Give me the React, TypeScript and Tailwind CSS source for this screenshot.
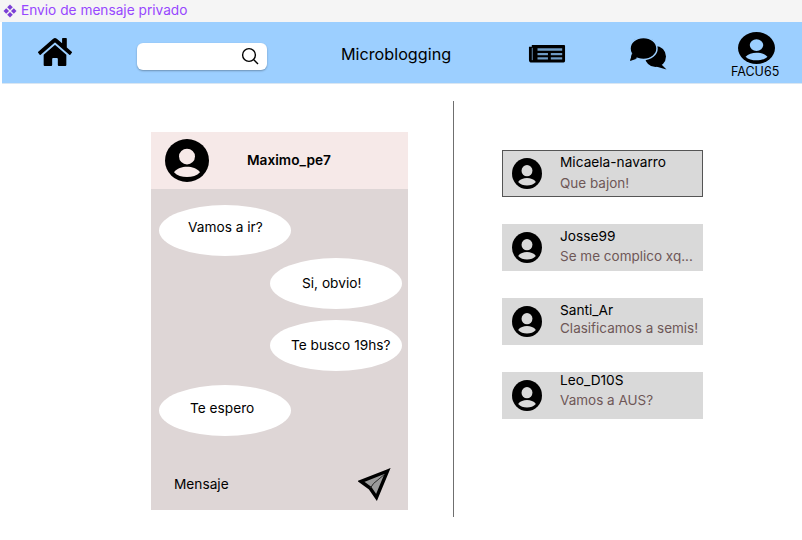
import { FaHome } from "react-icons/fa";

const font = { fontFamily: "Inter, sans-serif" };

const conversations = [
  { name: "Micaela-navarro", text: "Que bajon!", active: true, mt: "mt-0", top: "mt-[3px]", gap: "mt-[4px]" },
  { name: "Josse99", text: "Se me complico xq...", active: false, mt: "mt-[27px]", top: "mt-[4px]", gap: "mt-[3px]" },
  { name: "Santi_Ar", text: "Clasificamos a semis!", active: false, mt: "mt-[27px]", top: "mt-[4px]", gap: "mt-[1px]" },
  { name: "Leo_D10S", text: "Vamos a AUS?", active: false, mt: "mt-[27px]", top: "mt-0", gap: "mt-[3px]" },
];

const UserIcon = ({ className }: { className: string }) => (
  <svg viewBox="0 0 44 44" preserveAspectRatio="none" className={className}>
    <circle cx="22" cy="22" r="22" fill="#000" />
    <circle cx="22" cy="18" r="8" fill="currentColor" />
    <path d="M9 34 C12 30 17 28.5 22 28.5 C27 28.5 32 30 35 34 C32 37.5 27 39 22 39 C17 39 12 37.5 9 34 Z" fill="currentColor" />
  </svg>
);

const Bubble = ({ text, right, className }: { text: string; right?: boolean; className: string }) => (
  <div className={`w-[132px] h-[51px] rounded-[50%] bg-white flex items-center text-[13.7px] text-black ${right ? "self-end" : "self-start"} ${className}`}>
    {text}
  </div>
);

export default function App() {
  return (
    <div className="w-[802px] h-[540px] bg-white overflow-hidden" style={font}>
      <div className="h-[22px] bg-[#f5f5f5] pl-[3px] flex items-center gap-[4px] text-[13.7px] leading-none text-[#9747ff]">
        <svg viewBox="0 0 14 14" className="w-[14px] h-[14px]" fill="#7b3fd6">
          <path d="M7 0.5 L9.8 3.2 L7 6 L4.2 3.2 Z" />
          <path d="M7 8 L9.8 10.8 L7 13.5 L4.2 10.8 Z" />
          <path d="M3.2 4.2 L6 7 L3.2 9.8 L0.5 7 Z" />
          <path d="M10.8 4.2 L13.5 7 L10.8 9.8 L8 7 Z" />
        </svg>
        <span>Envio de mensaje privado</span>
      </div>

      <header className="ml-[2px] h-[62px] bg-[#9ccfff] border-b border-[#d9e6f2] flex items-center text-black">
        <FaHome preserveAspectRatio="none" className="ml-[36px] mb-[2px] w-[34px] h-[32px]" />
        <div className="ml-[65px] w-[130px] h-[27px] mt-[7px] bg-white rounded-[6px] shadow-[0_1px_2px_rgba(0,0,0,0.3)] flex items-center justify-end pr-[8px]">
          <svg viewBox="0 0 18 18" className="w-[18px] h-[18px]" fill="none" stroke="#000" strokeWidth="1.4">
            <circle cx="8" cy="8" r="6.4" />
            <path d="M12.8 12.8 L17 17" />
          </svg>
        </div>
        <span className="ml-[74px] mt-[3px] text-[16.2px]">Microblogging</span>
        <svg viewBox="0 0 38 20" className="ml-[77px] mt-[1px] w-[38px] h-[19px]">
          <path d="M5 1 H37 A1 1 0 0 1 38 2 V18 A1.5 1.5 0 0 1 36.5 19.5 H3 A3 3 0 0 1 0 16.5 V3 H3 V1 Z" fill="#000" />
          <rect x="3" y="4" width="0.9" height="13" fill="#6f9cc6" />
          <rect x="9" y="4.5" width="26" height="2.6" fill="#6f9cc6" />
          <rect x="9" y="9.5" width="11" height="2.3" fill="#6f9cc6" />
          <rect x="23" y="9.5" width="12" height="2.3" fill="#6f9cc6" />
          <rect x="9" y="14" width="11" height="2.3" fill="#6f9cc6" />
          <rect x="23" y="14" width="12" height="2.3" fill="#6f9cc6" />
        </svg>
        <svg viewBox="0 0 38 33" className="ml-[63px] mt-[2px] w-[38px] h-[33px]">
          <ellipse cx="26.5" cy="19.5" rx="10.5" ry="10.5" fill="#000" />
          <path d="M32 27 L37.5 32.5 L27 29.5 Z" fill="#000" />
          <path d="M3 17 L1 24 L10 21 Z" fill="#000" />
          <ellipse cx="14.5" cy="11.5" rx="13.5" ry="11" fill="#000" stroke="#9ccfff" strokeWidth="1.5" />
          <path d="M3 16 L1.5 23.5 L9 20 Z" fill="#000" />
        </svg>
        <div className="ml-[63px] w-[50px] flex flex-col items-center mt-[6px]">
          <UserIcon className="ml-[3px] w-[37px] h-[32px] text-[#9ccfff]" />
          <span className="text-[12.5px] leading-[14px] mt-[1px]">FACU65</span>
        </div>
      </header>

      <main className="flex items-start pt-[17px]">
        <section className="ml-[151px] mt-[31px] w-[257px] h-[378px] bg-[#ded6d6] flex flex-col">
          <div className="h-[57px] bg-[#f6e9e8] flex items-center pl-[14px]">
            <UserIcon className="w-[44px] h-[43px] mb-[1px] text-[#f6e9e8]" />
            <span className="ml-[38px] mb-[1px] text-[13.7px] font-semibold text-black">Maximo_pe7</span>
          </div>
          <div className="flex-1 flex flex-col px-[6px] pt-[16px]">
            <Bubble text="Vamos a ir?" className="ml-[2px] pl-[29px] pb-[7px]" />
            <Bubble text="Si, obvio!" right className="mt-[2px] pl-[32px]" />
            <Bubble text="Te busco 19hs?" right className="mt-[11px] pl-[21px] pb-[1px]" />
            <Bubble text="Te espero" className="mt-[14px] ml-[2px] pl-[31px] pb-[5px]" />
            <div className="mt-[auto] mb-[8px] flex items-center justify-between pl-[17px] pr-[10px]">
              <span className="text-[13.7px] text-black mb-[2px]">Mensaje</span>
              <svg viewBox="0 0 34 34" className="w-[34px] h-[34px]">
                <path d="M29.5 3 L3 13.5 L12 20 L18.5 29.5 Z" fill="#9b9b9b" stroke="#000" strokeWidth="3.4" strokeLinejoin="miter" strokeMiterlimit="8" />
                <path d="M27 6 L15.5 15.5 L12.5 20" fill="none" stroke="#2a2a2a" strokeWidth="1" />
              </svg>
            </div>
          </div>
        </section>

        <div className="ml-[45px] w-px h-[416px] bg-[#6f6f6f]" />

        <aside className="ml-[48px] mt-[49px] w-[201px] flex flex-col text-[13.7px]">
          {conversations.map((c) => (
            <div
              key={c.name}
              className={`h-[47px] bg-[#d9d9d9] flex items-center ${c.mt} ${c.active ? "border border-[#555] pl-[9px]" : "pl-[10px]"}`}
            >
              <UserIcon className="w-[30px] h-[31px] mb-[1px] shrink-0 text-[#d9d9d9]" />
              <div className="ml-[18px] self-start leading-[17px] whitespace-nowrap">
                <div className={`text-black ${c.top}`}>{c.name}</div>
                <div className={`text-[#6e5757] text-[13.5px] ${c.gap}`}>{c.text}</div>
              </div>
            </div>
          ))}
        </aside>
      </main>
    </div>
  );
}
